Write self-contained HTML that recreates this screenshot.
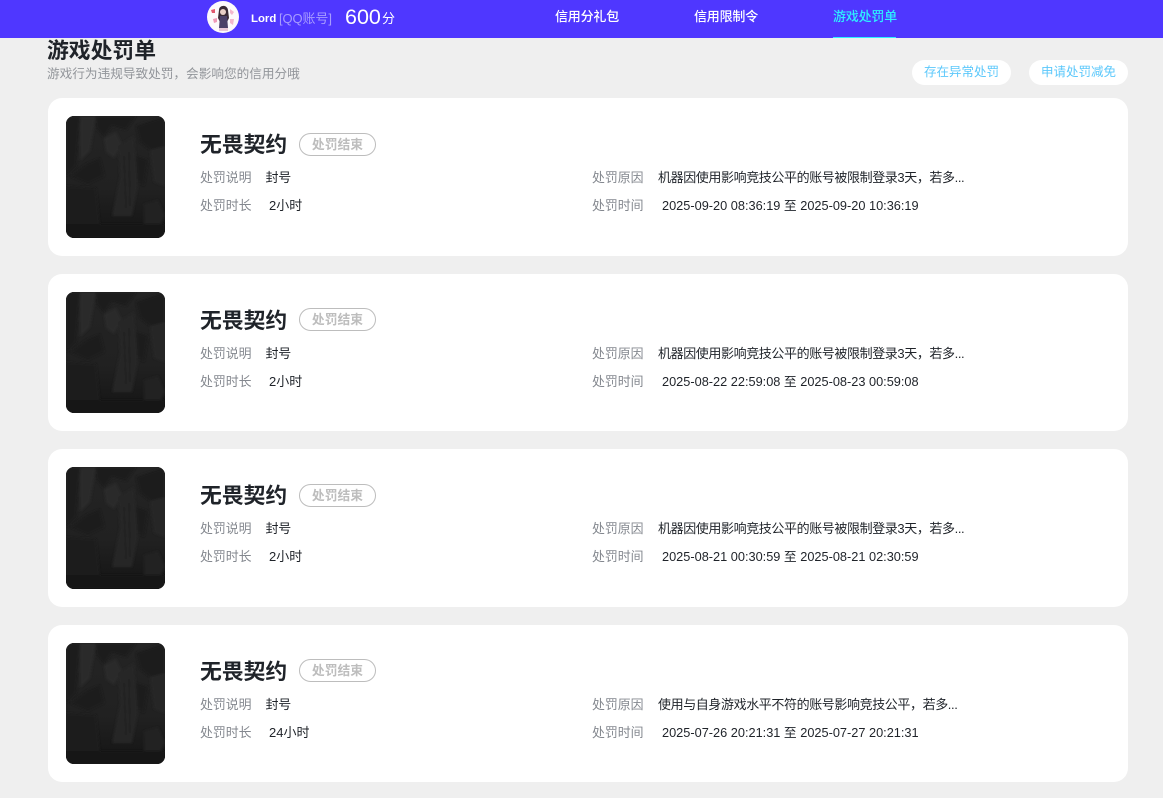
<!DOCTYPE html>
<html lang="zh-CN">
<head>
<meta charset="utf-8">
<title>游戏处罚单</title>
<style>
html,body{margin:0;padding:0}
body{width:1163px;height:798px;overflow:hidden;background:#efefef;position:relative;font-family:"Liberation Sans","Noto Sans CJK SC",sans-serif;font-size:13px;color:#1f2329}
.a{position:absolute;white-space:nowrap;line-height:18px}
.top{position:absolute;left:0;top:0;width:1163px;height:38px;background:#4f37ff}
.nav{font-size:13px;color:#fff;top:8px;letter-spacing:-.2px;font-weight:500}
.pill{position:absolute;top:60px;height:25px;width:99px;border-radius:13px;background:#fff;color:#5cc8fb;font-size:12.5px;line-height:25px;text-align:center}
.card{position:absolute;left:48px;width:1080px;background:#fff;border-radius:14px}
.thumb{position:absolute;left:18px;top:18px;width:99px;height:122px;border-radius:8px;overflow:hidden;background:#1e1e1e}
.s .thumb{height:121px}
.thumb svg{display:block;width:99px;height:122px}
.name{position:absolute;left:152px;top:33px;font-size:21.8px;line-height:28px;font-weight:700;color:#1f2329;white-space:nowrap}
.tag{position:absolute;left:251px;top:35px;width:75px;height:21px;border:1px solid #bdbdbd;border-radius:12px;color:#bdbdbd;font-size:12.8px;font-weight:700;line-height:21px;text-align:center}
.s .tag{top:34px}
.l{position:absolute;color:#84888f;font-size:12.9px;line-height:18px;white-space:nowrap}
.v{position:absolute;color:#1f2329;font-size:13px;line-height:18px;white-space:nowrap}
.h{left:217.5px;top:71px;letter-spacing:-.3px}
.r{letter-spacing:-.4px}
.t{font-size:12.75px}
</style>
</head>
<body>
<svg width="0" height="0" style="position:absolute">
<defs>
<filter id="b"><feGaussianBlur stdDeviation="1.2"/></filter>
<linearGradient id="g" x1="0" y1="0" x2="0" y2="1"><stop offset="0" stop-color="#242424"/><stop offset=".6" stop-color="#212121"/><stop offset="1" stop-color="#141414"/></linearGradient>
<symbol id="art" viewBox="0 0 99 122">
<rect width="99" height="122" fill="url(#g)"/>
<g filter="url(#b)">
<path d="M0 0H14L10 50 0 60Z" fill="#1c1c1c"/>
<path d="M14 0H30L24 35 14 45Z" fill="#292929"/>
<path d="M30 0H70L60 14 46 10 38 22 30 12Z" fill="#1c1c1c"/>
<path d="M38 22L50 16 56 28 48 42 40 36Z" fill="#2b2b2b"/>
<path d="M20 48L34 42 38 60 22 68 4 60Z" fill="#1b1b1b"/>
<path d="M52 30L68 20 72 70 66 100H46L54 60Z" fill="#262626"/>
<path d="M58 40L60 92M63 36L64 90" stroke="#1e1e1e" stroke-width="1" fill="none"/>
<path d="M70 10L99 0V30L84 34 74 26Z" fill="#1b1b1b"/>
<path d="M84 34L99 30V70L88 66Z" fill="#282828"/>
<path d="M70 40L82 44 78 70 72 66Z" fill="#1a1a1a"/>
<path d="M0 70L30 72 34 110H0Z" fill="#1f1f1f"/>
<path d="M78 88L92 84 99 100 90 116 78 110Z" fill="#242424"/>
<path d="M0 108H99V122H0Z" fill="#171717"/>
</g>
</symbol>
<symbol id="ava" viewBox="0 0 32 32">
<circle cx="16" cy="16" r="16" fill="#fdf9fb"/>
<path d="M12 9C12 4 20 3 21 9L22 17 20 21H13L11 17Z" fill="#3a2a34"/>
<circle cx="16" cy="11" r="3" fill="#e8cfc6"/>
<path d="M13 15H20L21 27H12Z" fill="#4b4168"/>
<path d="M4 9L8 8 8 12 5 12Z" fill="#e2586f"/>
<path d="M6 18L10 17 10 21 7 22Z" fill="#f09ab8"/>
<path d="M23 8L27 11 25 14 23 12ZM23 18L27 18 26 24 23 22Z" fill="#f3b7cd"/>
<path d="M12 27H21V30H12Z" fill="#e8c7d5"/>
</symbol>
</defs>
</svg>

<div class="top"></div>
<svg class="a" style="left:207px;top:1px;width:32px;height:32px"><use href="#ava"/></svg>
<div class="a" style="left:251px;top:10px;font-size:11.4px;color:#fff;font-weight:700">Lord</div>
<div class="a" style="left:279px;top:10px;font-size:13px;color:#a79cff;letter-spacing:-.1px">[QQ账号]</div>
<div class="a" style="left:345px;top:5px;font-size:21.5px;line-height:24px;color:#fff">600</div>
<div class="a" style="left:382px;top:10px;font-size:13px;color:#fff">分</div>
<div class="a nav" style="left:555px">信用分礼包</div>
<div class="a nav" style="left:694px">信用限制令</div>
<div class="a nav" style="left:833px;color:#2df0ff">游戏处罚单</div>
<div class="a" style="left:833px;top:37px;width:63px;height:1px;background:#2df0ff"></div>

<div class="a" style="left:47px;top:38px;font-size:21.8px;line-height:26px;font-weight:700;color:#1f2329">游戏处罚单</div>
<div class="a" style="left:47px;top:65px;font-size:12.65px;color:#92959a">游戏行为违规导致处罚，会影响您的信用分哦</div>
<div class="pill" style="left:912px">存在异常处罚</div>
<div class="pill" style="left:1029px">申请处罚减免</div>

<div class="card" style="top:98px;height:158px">
  <div class="thumb"><svg><use href="#art"/></svg></div>
  <div class="name">无畏契约</div><div class="tag">处罚结束</div>
  <div class="l" style="left:152px;top:71px">处罚说明</div><div class="v h">封号</div>
  <div class="l" style="left:152px;top:99px">处罚时长</div><div class="v" style="left:221px;top:99px">2小时</div>
  <div class="l" style="left:544px;top:71px">处罚原因</div><div class="v r" style="left:610px;top:71px">机器因使用影响竞技公平的账号被限制登录3天，若多...</div>
  <div class="l" style="left:544px;top:99px">处罚时间</div><div class="v t" style="left:614px;top:99px">2025-09-20 08:36:19 至 2025-09-20 10:36:19</div>
</div>

<div class="card s" style="top:274px;height:157px">
  <div class="thumb"><svg><use href="#art"/></svg></div>
  <div class="name">无畏契约</div><div class="tag">处罚结束</div>
  <div class="l" style="left:152px;top:71px">处罚说明</div><div class="v h">封号</div>
  <div class="l" style="left:152px;top:99px">处罚时长</div><div class="v" style="left:221px;top:99px">2小时</div>
  <div class="l" style="left:544px;top:71px">处罚原因</div><div class="v r" style="left:610px;top:71px">机器因使用影响竞技公平的账号被限制登录3天，若多...</div>
  <div class="l" style="left:544px;top:99px">处罚时间</div><div class="v t" style="left:614px;top:99px">2025-08-22 22:59:08 至 2025-08-23 00:59:08</div>
</div>

<div class="card" style="top:449px;height:158px">
  <div class="thumb"><svg><use href="#art"/></svg></div>
  <div class="name">无畏契约</div><div class="tag">处罚结束</div>
  <div class="l" style="left:152px;top:71px">处罚说明</div><div class="v h">封号</div>
  <div class="l" style="left:152px;top:99px">处罚时长</div><div class="v" style="left:221px;top:99px">2小时</div>
  <div class="l" style="left:544px;top:71px">处罚原因</div><div class="v r" style="left:610px;top:71px">机器因使用影响竞技公平的账号被限制登录3天，若多...</div>
  <div class="l" style="left:544px;top:99px">处罚时间</div><div class="v t" style="left:614px;top:99px">2025-08-21 00:30:59 至 2025-08-21 02:30:59</div>
</div>

<div class="card s" style="top:625px;height:157px">
  <div class="thumb"><svg><use href="#art"/></svg></div>
  <div class="name">无畏契约</div><div class="tag">处罚结束</div>
  <div class="l" style="left:152px;top:71px">处罚说明</div><div class="v h">封号</div>
  <div class="l" style="left:152px;top:99px">处罚时长</div><div class="v" style="left:221px;top:99px">24小时</div>
  <div class="l" style="left:544px;top:71px">处罚原因</div><div class="v r" style="left:610px;top:71px">使用与自身游戏水平不符的账号影响竞技公平，若多...</div>
  <div class="l" style="left:544px;top:99px">处罚时间</div><div class="v t" style="left:614px;top:99px">2025-07-26 20:21:31 至 2025-07-27 20:21:31</div>
</div>
</body>
</html>
